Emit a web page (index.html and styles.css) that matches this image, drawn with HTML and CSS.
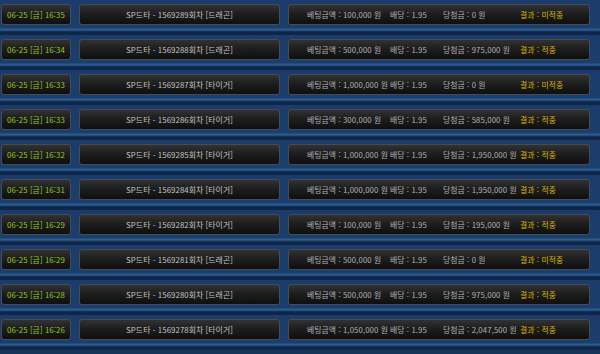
FILE: index.html
```html
<!DOCTYPE html>
<html lang="ko">
<head>
<meta charset="utf-8">
<link rel="stylesheet" href="styles.css">
</head>
<body>
<div class="list">
  <div class="row"><div class="box date">06-25 [금] 16:35</div><div class="box game">SP드타 - 1569289회차 [드래곤]</div><div class="box info"><span class="bet">베팅금액 : 100,000 원</span><span class="odds">배당 : 1.95</span><span class="win">당첨금 : 0 원</span><span class="res">결과 : 미적중</span></div></div>
  <div class="row"><div class="box date">06-25 [금] 16:34</div><div class="box game">SP드타 - 1569288회차 [드래곤]</div><div class="box info"><span class="bet">베팅금액 : 500,000 원</span><span class="odds">배당 : 1.95</span><span class="win">당첨금 : 975,000 원</span><span class="res">결과 : 적중</span></div></div>
  <div class="row"><div class="box date">06-25 [금] 16:33</div><div class="box game">SP드타 - 1569287회차 [타이거]</div><div class="box info"><span class="bet">베팅금액 : 1,000,000 원</span><span class="odds">배당 : 1.95</span><span class="win">당첨금 : 0 원</span><span class="res">결과 : 미적중</span></div></div>
  <div class="row"><div class="box date">06-25 [금] 16:33</div><div class="box game">SP드타 - 1569286회차 [타이거]</div><div class="box info"><span class="bet">베팅금액 : 300,000 원</span><span class="odds">배당 : 1.95</span><span class="win">당첨금 : 585,000 원</span><span class="res">결과 : 적중</span></div></div>
  <div class="row"><div class="box date">06-25 [금] 16:32</div><div class="box game">SP드타 - 1569285회차 [타이거]</div><div class="box info"><span class="bet">베팅금액 : 1,000,000 원</span><span class="odds">배당 : 1.95</span><span class="win">당첨금 : 1,950,000 원</span><span class="res">결과 : 적중</span></div></div>
  <div class="row"><div class="box date">06-25 [금] 16:31</div><div class="box game">SP드타 - 1569284회차 [타이거]</div><div class="box info"><span class="bet">베팅금액 : 1,000,000 원</span><span class="odds">배당 : 1.95</span><span class="win">당첨금 : 1,950,000 원</span><span class="res">결과 : 적중</span></div></div>
  <div class="row"><div class="box date">06-25 [금] 16:29</div><div class="box game">SP드타 - 1569282회차 [타이거]</div><div class="box info"><span class="bet">베팅금액 : 100,000 원</span><span class="odds">배당 : 1.95</span><span class="win">당첨금 : 195,000 원</span><span class="res">결과 : 적중</span></div></div>
  <div class="row"><div class="box date">06-25 [금] 16:29</div><div class="box game">SP드타 - 1569281회차 [드래곤]</div><div class="box info"><span class="bet">베팅금액 : 500,000 원</span><span class="odds">배당 : 1.95</span><span class="win">당첨금 : 0 원</span><span class="res">결과 : 미적중</span></div></div>
  <div class="row"><div class="box date">06-25 [금] 16:28</div><div class="box game">SP드타 - 1569280회차 [드래곤]</div><div class="box info"><span class="bet">베팅금액 : 500,000 원</span><span class="odds">배당 : 1.95</span><span class="win">당첨금 : 975,000 원</span><span class="res">결과 : 적중</span></div></div>
  <div class="row"><div class="box date">06-25 [금] 16:26</div><div class="box game">SP드타 - 1569278회차 [타이거]</div><div class="box info"><span class="bet">베팅금액 : 1,050,000 원</span><span class="odds">배당 : 1.95</span><span class="win">당첨금 : 2,047,500 원</span><span class="res">결과 : 적중</span></div></div>
</div>
</body>
</html>
```

FILE: styles.css
```css
html, body {
  margin: 0;
  padding: 0;
  background: #163358;
  height: 354px;
  overflow: hidden;
}

.list {
  display: flex;
  flex-direction: column;
}

.row {
  display: flex;
  gap: 8px;
  height: 35px;
  padding: 4px 0 0 1px;
  box-sizing: border-box;
  background: linear-gradient(to bottom,
    #1b3c6a 0px, #1c3e6c 28px,
    #2a5b8f 29px, #2c5e93 30px,
    #183b64 31px, #0f2547 32px, #102749 35px);
  font-family: "Noto Sans CJK KR", "Noto Sans", sans-serif;
  font-size: 7.8px;
  letter-spacing: 0.1px;
}

.box {
  height: 21px;
  box-sizing: border-box;
  border: 1px solid #464c54;
  border-radius: 3px;
  background: linear-gradient(to bottom, #323232 0%, #1e1e1e 45%, #0f0f0f 100%);
  display: flex;
  align-items: center;
  white-space: nowrap;
}

.date {
  width: 70px;
  justify-content: center;
  color: #94c81e;
}

.game {
  width: 201px;
  justify-content: center;
  color: #c4c4c4;
}

.info {
  width: 302px;
  padding-left: 18px;
  color: #b0b0b0;
}

.bet { width: 83px; }
.odds { width: 53px; }
.win { width: 77px; }
.res { color: #d8b400; }
```
